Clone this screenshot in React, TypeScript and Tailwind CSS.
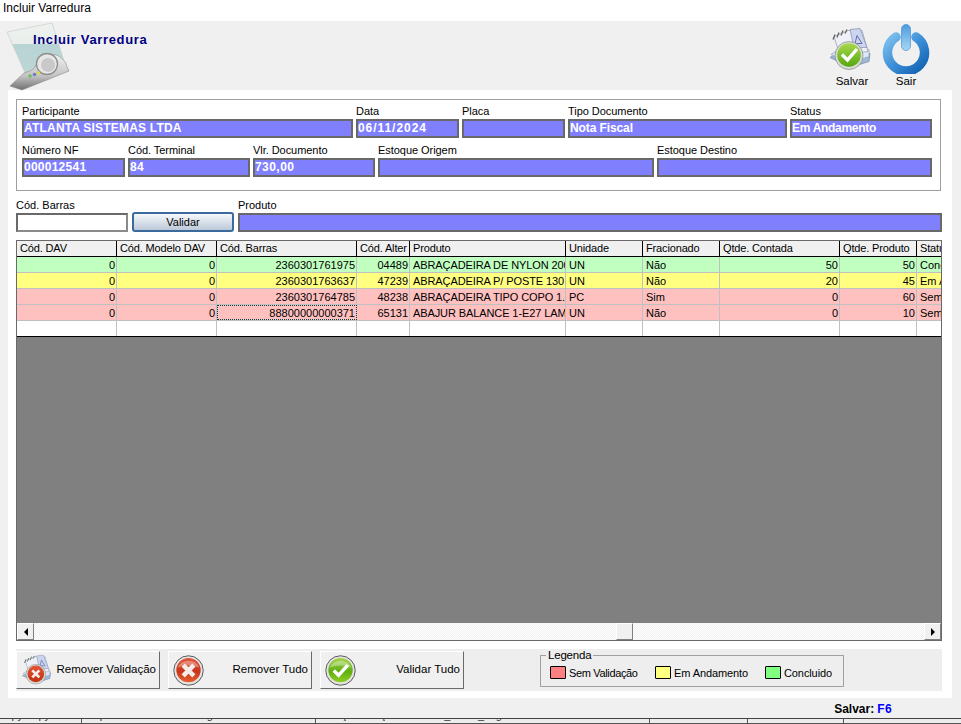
const Label = ({ children }: { children: React.ReactNode }) => (
  <div className="h-[14px] text-[11px] leading-[13px] tracking-[-0.05px] text-black whitespace-nowrap">{children}</div>
);

const Box = ({ children, t = "tracking-[0.2px]" }: { children?: React.ReactNode; t?: string }) => (
  <div className={`h-[19px] overflow-hidden whitespace-nowrap border-2 border-[#696969] bg-[#8080ff] text-[12px] font-bold leading-[15px] text-white ${t}`}>
    {children}
  </div>
);

const Field = ({ label, value, w, t }: { label: string; value?: string; w: string; t?: string }) => (
  <div className={w}>
    <Label>{label}</Label>
    <Box t={t}>{value}</Box>
  </div>
);

const Round = ({ id, check, size }: { id: string; check?: boolean; size: number }) => (
  <svg className="shrink-0" width={size} height={size} viewBox="0 0 32 32">
    <defs>
      <linearGradient id={id} x1="0" y1="0" x2="0" y2="1">
        <stop offset="0" stopColor={check ? "#a5d64a" : "#e2573a"} />
        <stop offset="0.55" stopColor={check ? "#5fae12" : "#c8351a"} />
        <stop offset="1" stopColor={check ? "#8fd022" : "#e8602f"} />
      </linearGradient>
    </defs>
    <circle cx="16" cy="16" r="15.2" fill="#e4e4e4" stroke="#333" strokeWidth="0.8" />
    <circle cx="16" cy="15.6" r="12.6" fill={`url(#${id})`} />
    <path d="M5 13 A11.5 10 0 0 1 27 13 A16 8 0 0 0 5 13Z" fill="#fff" opacity="0.35" />
    {check ? (
      <path d="M9 16 L14 21 L23.5 10.5" fill="none" stroke="#fff" strokeWidth="3.6" />
    ) : (
      <path d="M10.5 10.5 L21.5 21.5 M21.5 10.5 L10.5 21.5" fill="none" stroke="#f4ece8" strokeWidth="4.6" />
    )}
  </svg>
);

const Docs = ({ id, check, w, h, className = "" }: { id: string; check?: boolean; w: number; h: number; className?: string }) => (
  <svg className={`shrink-0 ${className}`} width={w} height={h} viewBox="0 0 44 44">
    <defs>
      <linearGradient id={id} x1="0" y1="0" x2="0" y2="1">
        <stop offset="0" stopColor={check ? "#a8d94c" : "#e2573a"} />
        <stop offset="1" stopColor={check ? "#55a60f" : "#c2300f"} />
      </linearGradient>
    </defs>
    <path d="M2 30 L12 24 L42 26 L41 34 L22 40 Z" fill="#9fb9d8" stroke="#6f8aa8" strokeWidth="0.7" />
    <path d="M3 27 L12 21 L41 22 L41 29 L22 36 Z" fill="#dfe8f4" stroke="#8aa0ba" strokeWidth="0.7" />
    <path d="M6 9 L20 3 L34 3 L40 24 L12 28 Z" fill="#eef1f8" stroke="#8c97aa" strokeWidth="0.7" />
    <path d="M22 2 L32 1 L39 20 L26 20 Z" fill="#cdd5ee" stroke="#7f8cb0" strokeWidth="0.7" />
    <path d="M5 12 L7 7 M9 10 L11 5 M13 8 L15 3 M17 6 L19 2" stroke="#666" strokeWidth="1.3" />
    <path d="M29 8 L34 16 L27 16 Z" fill="none" stroke="#5b6fb0" strokeWidth="1" />
    <circle cx="21" cy="28" r="14" fill="#d8dcd4" stroke="#777" strokeWidth="0.6" />
    <circle cx="21" cy="27.5" r="11.8" fill={`url(#${id})`} />
    {check ? (
      <path d="M14 27 L19.5 32.5 L29 21.5" fill="none" stroke="#fff" strokeWidth="3.4" />
    ) : (
      <path d="M16 22.5 L26 32.5 M26 22.5 L16 32.5" fill="none" stroke="#f6efe9" strokeWidth="3.8" />
    )}
  </svg>
);

const Power = () => (
  <svg width="50" height="50" viewBox="0 0 50 50">
    <defs>
      <linearGradient id="pw" x1="0" y1="0" x2="1" y2="1">
        <stop offset="0" stopColor="#7cc0ee" />
        <stop offset="0.5" stopColor="#3b8ed6" />
        <stop offset="1" stopColor="#0f5fb0" />
      </linearGradient>
      <linearGradient id="pb" x1="0" y1="0" x2="0" y2="1">
        <stop offset="0" stopColor="#4a9be0" />
        <stop offset="1" stopColor="#a8d8f4" />
      </linearGradient>
    </defs>
    <path d="M15 13 A18.5 18.5 0 1 0 35 13" fill="none" stroke="url(#pw)" strokeWidth="9.5" strokeLinecap="round" />
    <rect x="20.5" y="0.5" width="9" height="26" rx="4.5" fill="url(#pb)" stroke="#3d86c8" strokeWidth="0.6" />
  </svg>
);

const Logo = () => (
  <svg width="80" height="70" viewBox="0 0 80 70">
    <defs>
      <linearGradient id="lg" x1="0" y1="0" x2="0" y2="1">
        <stop offset="0" stopColor="#eff2ef" />
        <stop offset="0.42" stopColor="#e9eeea" />
        <stop offset="0.43" stopColor="#b9d4d4" />
        <stop offset="1" stopColor="#bcd6d6" />
      </linearGradient>
      <linearGradient id="lb" x1="0" y1="0" x2="0" y2="1">
        <stop offset="0" stopColor="#f2f2f2" />
        <stop offset="0.6" stopColor="#c4c4c4" />
        <stop offset="1" stopColor="#6f6f6f" />
      </linearGradient>
    </defs>
    <path d="M7 11 L52 2 L64 40 L25 52 Z" fill="url(#lg)" stroke="#c9cfcb" strokeWidth="0.7" />
    <path d="M10 65 L24 52 C30 50 34 49 36 44 C38 36 52 30 60 36 C62 38 66 40 67 46 L69 50 L22 69 Z" fill="url(#lb)" stroke="#888" strokeWidth="0.6" />
    <circle cx="47" cy="43" r="10.5" fill="#e6e6e6" stroke="#8d8d8d" strokeWidth="1.3" />
    <circle cx="48" cy="44" r="7" fill="#c9c9c9" />
    <circle cx="30" cy="55" r="1.8" fill="#6cbf5a" />
    <circle cx="34.5" cy="53.5" r="1.8" fill="#6a7fc8" />
    <circle cx="38.5" cy="52" r="1.8" fill="#e3d64a" />
  </svg>
);

const COLS = "grid grid-cols-[100px_100px_140px_53px_156px_77px_77px_120px_77px_24px]";
const HEAD = ["Cód. DAV", "Cód. Modelo DAV", "Cód. Barras", "Cód. Alter", "Produto", "Unidade", "Fracionado", "Qtde. Contada", "Qtde. Produto", "Status"];
const RIGHT = [true, true, true, true, false, false, false, true, true, false];
const ROWS = [
  { bg: "bg-[#c0ffc0]", c: ["0", "0", "2360301761975", "04489", "ABRAÇADEIRA DE NYLON 200", "UN", "Não", "50", "50", "Concluido"] },
  { bg: "bg-[#ffff80]", c: ["0", "0", "2360301763637", "47239", "ABRAÇADEIRA P/ POSTE 130", "UN", "Não", "20", "45", "Em Andamento"] },
  { bg: "bg-[#ffc0c0]", c: ["0", "0", "2360301764785", "48238", "ABRAÇADEIRA TIPO COPO 1.", "PC", "Sim", "0", "60", "Sem Validação"] },
  { bg: "bg-[#ffc0c0]", c: ["0", "0", "88800000000371", "65131", "ABAJUR BALANCE 1-E27 LAMP", "UN", "Não", "0", "10", "Sem Validação"] },
];

const ActionButton = ({ icon, label }: { icon: React.ReactNode; label: string }) => (
  <button className="flex h-[38px] w-[144px] items-center justify-between border border-t-white border-l-white border-r-[#696969] border-b-[#696969] bg-[#f0f0f0] pl-[4px] pr-[3px] text-[11.5px] text-black">
    {icon}
    <span className="whitespace-nowrap">{label}</span>
  </button>
);

const Legend = ({ color, label, w, t = "" }: { color: string; label: string; w: string; t?: string }) => (
  <div className={`flex shrink-0 items-center gap-[3px] ${w}`}>
    <span className={`h-[13px] w-[16px] shrink-0 rounded-[1px] border border-black ${color}`} />
    <span className={`whitespace-nowrap pt-px text-[11px] leading-[14px] text-black ${t}`}>{label}</span>
  </div>
);

const Strip = ({ w, children }: { w: string; children: React.ReactNode }) => (
  <div className={`${w} overflow-hidden whitespace-nowrap border-l border-[#555] pl-[3px]`}>
    <span className="block -translate-y-[10px]">{children}</span>
  </div>
);

export default function App() {
  return (
    <div className="flex h-[724px] w-[961px] flex-col overflow-hidden bg-[#f0f0f0] text-black [font-family:Liberation_Sans,Arial,sans-serif]">
      <div className="h-[21px] bg-white pl-[3px] text-[12px] leading-[16px]">Incluir Varredura</div>

      <div className="relative flex h-[69px] items-start justify-between">
        <Logo />
        <div className="absolute left-[33px] top-[11px] text-[13px] font-bold leading-[16px] tracking-[0.65px] text-[#000080]">
          Incluir Varredura
        </div>
        <div className="mr-[28px] flex">
          <div className="flex w-[54px] flex-col items-center pt-[6px]">
            <Docs id="d1" check w={44} h={45} className="mr-[4px]" />
            <span className="mt-[2px] text-[11.5px] leading-[14px]">Salvar</span>
          </div>
          <div className="flex w-[54px] flex-col items-center pt-[3px]">
            <Power />
            <span className="text-[11.5px] leading-[14px]">Sair</span>
          </div>
        </div>
      </div>

      <div className="ml-[8px] flex h-[608px] w-[944px] flex-col bg-white pl-[8px] pt-[9px]">
        <div className="h-[92px] w-[925px] border border-[#a0a0a0] pl-[5px] pt-[5px]">
          <div className="flex gap-[3px]">
            <Field label="Participante" value="ATLANTA SISTEMAS LTDA" w="w-[331px]" />
            <Field label="Data" value="06/11/2024" w="w-[103px]" t="tracking-[0.95px]" />
            <Field label="Placa" w="w-[103px]" />
            <Field label="Tipo Documento" value="Nota Fiscal" w="w-[219px]" t="tracking-[-0.1px]" />
            <Field label="Status" value="Em Andamento" w="w-[142px]" t="tracking-[-0.3px]" />
          </div>
          <div className="mt-[6px] flex gap-[3px]">
            <Field label="Número NF" value="000012541" w="w-[103px]" t="tracking-[0.25px]" />
            <Field label="Cód. Terminal" value="84" w="w-[122px]" t="tracking-[0.45px]" />
            <Field label="Vlr. Documento" value="730,00" w="w-[122px]" t="tracking-[0.45px]" />
            <Field label="Estoque Origem" w="w-[276px]" />
            <Field label="Estoque Destino" w="w-[275px]" />
          </div>
        </div>

        <div className="mt-[7px] flex w-[926px] items-end">
          <div className="w-[112px]">
            <div className="h-[15px] text-[11px] leading-[14px]">Cód. Barras</div>
            <div className="h-[19px] border-2 border-[#696969] border-r-[#8a8a8a] border-b-[#8a8a8a] bg-white" />
          </div>
          <button className="ml-[4px] h-[20px] w-[102px] rounded-[3px] border-2 border-[#3c6a9c] bg-gradient-to-b from-[#f6f8fb] to-[#bcc9d8] text-[11px] leading-[14px] text-black">
            Validar
          </button>
          <div className="ml-[4px] flex-1">
            <div className="h-[15px] text-[11px] leading-[14px]">Produto</div>
            <Box />
          </div>
        </div>

        <div className="mt-[8px] flex h-[401px] w-[926px] flex-col border border-[#696969] text-[11px]">
          <div className={`${COLS} h-[16px] border-b border-black bg-[#f0f0f0]`}>
            {HEAD.map((h, i) => (
              <div key={h} className={`overflow-hidden whitespace-nowrap pl-[3px] leading-[14px] tracking-[-0.15px] ${i < 9 ? "border-r border-black" : ""}`}>
                {h}
              </div>
            ))}
          </div>
          {ROWS.map((r, ri) => (
            <div key={ri} className={`${COLS} h-[16px] border-b border-[#c0c0c0] ${r.bg}`}>
              {r.c.map((v, i) => (
                <div
                  key={i}
                  className={`overflow-hidden whitespace-nowrap ${
                    ri === 3 && i === 2
                      ? "border border-dotted border-[#004040] leading-[14px]"
                      : `leading-[16px] ${i < 9 ? "border-r border-[#c0c0c0]" : ""}`
                  } ${RIGHT[i] ? "pr-px text-right" : "pl-[3px]"} ${i === 4 ? "tracking-[-0.1px]" : ""}`}
                >
                  {v}
                </div>
              ))}
            </div>
          ))}
          <div className={`${COLS} h-[16px] border-b border-black bg-white`}>
            {HEAD.map((h, i) => (
              <div key={h} className={i < 9 ? "border-r border-[#c0c0c0]" : ""} />
            ))}
          </div>
          <div className="flex-1 bg-[#808080]" />
          <div className="flex h-[17px] items-stretch justify-between bg-[repeating-conic-gradient(#f0f0f0_0_25%,#ffffff_0_50%)] bg-[length:2px_2px]">
            <div className="flex w-[17px] items-center justify-center border border-t-white border-l-white border-r-[#808080] border-b-[#808080] bg-[#f0f0f0]">
              <span className="h-0 w-0 border-y-[4px] border-r-[4px] border-y-transparent border-r-black" />
            </div>
            <div className="ml-[582px] w-[17px] border border-t-white border-l-white border-r-[#808080] border-b-[#808080] bg-[#f0f0f0]" />
            <div className="ml-auto flex w-[17px] items-center justify-center border border-t-white border-l-white border-r-[#808080] border-b-[#808080] bg-[#f0f0f0]">
              <span className="h-0 w-0 border-y-[4px] border-l-[4px] border-y-transparent border-l-black" />
            </div>
          </div>
        </div>

        <div className="mt-[8px] flex h-[42px] w-[926px] bg-[#eeeeee] pt-[2px]">
          <div className="flex gap-[8px]">
            <ActionButton icon={<Docs id="d2" w={31} h={32} />} label="Remover Validação" />
            <ActionButton icon={<Round id="r1" size={31} />} label="Remover Tudo" />
            <ActionButton icon={<Round id="r2" check size={31} />} label="Validar Tudo" />
          </div>
          <fieldset className="-mt-[2px] ml-[76px] h-[38px] w-[304px] border border-[#a0a0a0] pl-[9px]">
            <legend className="ml-[-4px] px-[2px] text-[11.5px] leading-[12px] tracking-[-0.2px]">Legenda</legend>
            <div className="flex pt-[4px]">
              <Legend color="bg-[#ff8080]" label="Sem Validação" w="w-[105px]" t="tracking-[-0.35px]" />
              <Legend color="bg-[#ffff80]" label="Em Andamento" w="w-[110px]" t="tracking-[-0.1px]" />
              <Legend color="bg-[#80ff80]" label="Concluido" w="w-[66px]" t="tracking-[-0.1px]" />
            </div>
          </fieldset>
        </div>
      </div>

      <div className="flex h-[20px] justify-end pr-[69px] pt-[4px] text-[12px] font-bold leading-[14px]">
        <span>Salvar:</span>
        <span className="pl-[3px] tracking-[0.4px] text-[#0000ff]">F6</span>
      </div>

      <div className="flex h-[6px] overflow-hidden border-y border-t-[#444] border-b-[#555] bg-[#ececec] text-[11px] leading-[12px] text-[#333]">
        <div className="w-[81px] overflow-hidden whitespace-nowrap pl-[6px]">
          <span className="block -translate-y-[10px]">spyserpy</span>
        </div>
        <Strip w="w-[234px]">Arquivo de alimentadoring</Strip>
        <Strip w="w-[334px]">Atenção: funções numero_bema_img análise</Strip>
        <Strip w="w-[98px]">Fora</Strip>
        <Strip w="w-[96px]">Servidor</Strip>
        <Strip w="flex-1">Usuário</Strip>
      </div>
    </div>
  );
}
